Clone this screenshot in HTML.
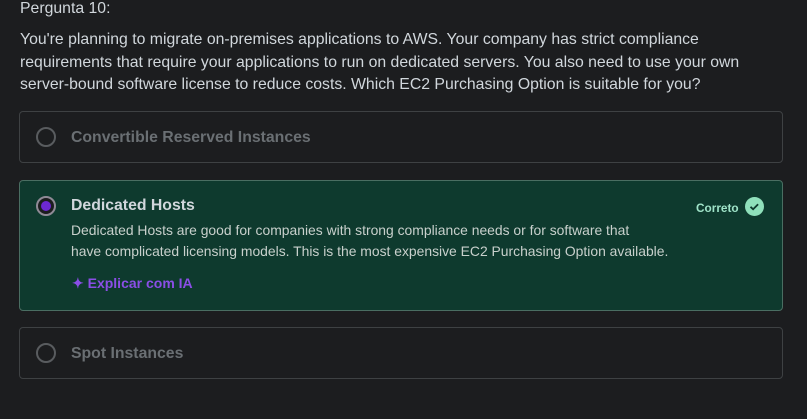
<html><head><style>
body{margin:0;background:#1c1d1f;width:807px;height:419px;overflow:hidden;font-family:"Liberation Sans",sans-serif;color:#d1d7dc;position:relative}
.t{position:absolute;left:20px;font-size:15.8px;white-space:nowrap}
.card{position:absolute;left:19px;width:764px;border:1px solid #3e4143;border-radius:4px;box-sizing:border-box}
.r{position:absolute;left:16px;width:20px;height:20px;border:2px solid #595c5f;border-radius:50%;box-sizing:border-box}
.lab{position:absolute;left:51px;font-weight:bold;font-size:15.8px}
</style></head><body>
<div class="t" style="top:0;line-height:18px">Pergunta 10:</div>
<div class="t" style="top:29px;line-height:22.5px">You're planning to migrate on-premises applications to AWS. Your company has strict compliance<br>requirements that require your applications to run on dedicated servers. You also need to use your own<br>server-bound software license to reduce costs. Which EC2 Purchasing Option is suitable for you?</div>
<div class="card" style="top:111px;height:52px"><div class="r" style="top:15px"></div><div class="lab" style="top:17px;color:#6a6f73">Convertible Reserved Instances</div></div>
<div class="card" style="top:180px;height:131px;background:#0e3a2e;border-color:#4a6e62">
<div class="r" style="top:15px;border-color:#8f8a96;background:#1c1d1f"><div style="position:absolute;left:3px;top:3px;width:10px;height:10px;border-radius:50%;background:#6d28d2"></div></div>
<div class="lab" style="top:16px;color:#d1d7dc">Dedicated Hosts</div>
<div style="position:absolute;left:51px;top:39px;font-size:13.9px;line-height:20.5px;white-space:nowrap;color:#c8d0cc">Dedicated Hosts are good for companies with strong compliance needs or for software that<br>have complicated licensing models. This is the most expensive EC2 Purchasing Option available.</div>
<div style="position:absolute;left:52px;top:94px;font-size:14px;font-weight:bold;color:#8a4ee6">✦ Explicar com IA</div>
<div style="position:absolute;left:676px;top:20px;font-size:11.8px;font-weight:bold;color:#9fe3c8">Correto</div>
<div style="position:absolute;left:725px;top:16px;width:19px;height:19px;border-radius:50%;background:#8fe0bb"><svg width="19" height="19" viewBox="0 0 19 19"><path d="M5.5 9.8l2.6 2.5 5-5" stroke="#0e3a2e" stroke-width="1.8" fill="none"/></svg></div>
</div>
<div class="card" style="top:327px;height:52px"><div class="r" style="top:15px"></div><div class="lab" style="top:17px;color:#6a6f73">Spot Instances</div></div>
</body></html>
